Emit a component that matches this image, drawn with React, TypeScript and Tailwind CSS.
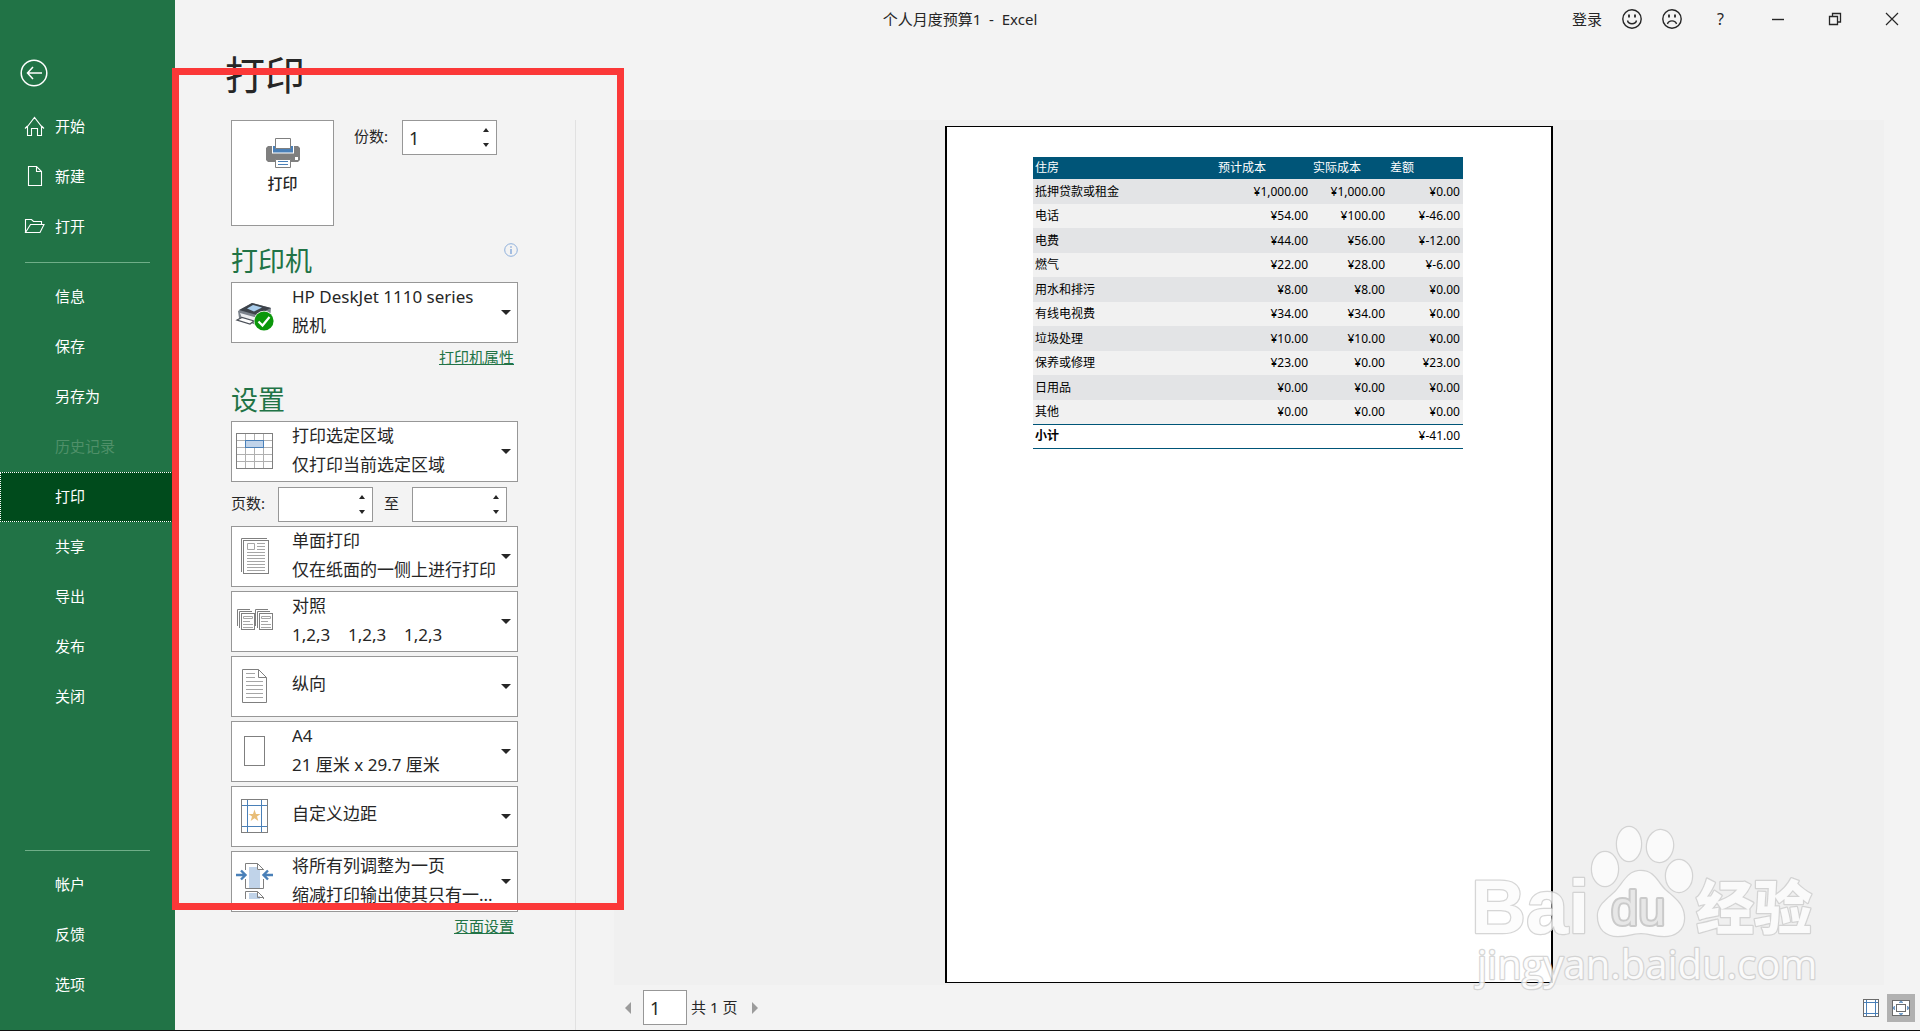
import type { ReactNode } from "react";

interface NavItem {
  label: string;
  icon?: ReactNode;
  active?: boolean;
  disabled?: boolean;
}

interface SettingProps {
  label: string;
  title: string;
  detail?: string;
  icon: ReactNode;
}

const topItems: NavItem[] = [
  {
    label: "开始",
    icon: <path d="M3.5 10.5 10.5 1.5 17.5 10.5V19.5H13.5V12.5H7.5V19.5H3.5V10.5M1 12.5 3.5 10M20 12.5 17.5 10" />,
  },
  { label: "新建", icon: <path d="M4.5 .5H12.5L17.5 5.5V19.5H4.5ZM12.5 .5V5.5H17.5" /> },
  { label: "打开", icon: <path d="M1.5 16.5V3.5H7.5L9.5 5.5H17.5V8.5M1.5 16.5 6.5 8.5H20L16 16.5Z" /> },
];

const fileItems: NavItem[] = [
  { label: "信息" },
  { label: "保存" },
  { label: "另存为" },
  { label: "历史记录", disabled: true },
  { label: "打印", active: true },
  { label: "共享" },
  { label: "导出" },
  { label: "发布" },
  { label: "关闭" },
];

const bottomItems: NavItem[] = [{ label: "帐户" }, { label: "反馈" }, { label: "选项" }];

const budgetRows = [
  ["抵押贷款或租金", "¥1,000.00", "¥1,000.00", "¥0.00"],
  ["电话", "¥54.00", "¥100.00", "¥-46.00"],
  ["电费", "¥44.00", "¥56.00", "¥-12.00"],
  ["燃气", "¥22.00", "¥28.00", "¥-6.00"],
  ["用水和排污", "¥8.00", "¥8.00", "¥0.00"],
  ["有线电视费", "¥34.00", "¥34.00", "¥0.00"],
  ["垃圾处理", "¥10.00", "¥10.00", "¥0.00"],
  ["保养或修理", "¥23.00", "¥0.00", "¥23.00"],
  ["日用品", "¥0.00", "¥0.00", "¥0.00"],
  ["其他", "¥0.00", "¥0.00", "¥0.00"],
];

function NavList({ items }: { items: NavItem[] }) {
  return (
    <ul>
      {items.map((item) => (
        <li key={item.label}>
          <button
            disabled={item.disabled}
            className={`flex h-[50px] w-full items-center border pb-0.5 text-left text-[15px] ${
              item.active ? "border-dotted border-white bg-[#004b1c]" : "border-transparent"
            } ${item.disabled ? "text-[#4f9069]" : "text-white"}`}
          >
            <span className="flex w-[54px] justify-end pr-2.5">
              {item.icon && (
                <svg width="21" height="20" viewBox="0 0 21 20" fill="none" stroke="white" strokeWidth="1.1">
                  {item.icon}
                </svg>
              )}
            </span>
            {item.label}
          </button>
        </li>
      ))}
    </ul>
  );
}

function Sidebar() {
  return (
    <nav className="flex w-[175px] shrink-0 flex-col bg-[#217346] pb-5">
      <button aria-label="返回" className="mt-[59px] mb-[15px] ml-5 w-7">
        <svg width="28" height="28" viewBox="0 0 28 28" fill="none" stroke="white" strokeWidth="1.5">
          <circle cx="14" cy="14" r="12.8" />
          <path d="M22 14H7.5M13 8 7.5 14 13 20" />
        </svg>
      </button>
      <NavList items={topItems} />
      <hr className="mx-[25px] mt-[10px] mb-[9px] border-[#6fae88]" />
      <NavList items={fileItems} />
      <hr className="mx-[25px] mt-auto mb-[9px] border-[#6fae88]" />
      <NavList items={bottomItems} />
    </nav>
  );
}

function TitleBar() {
  return (
    <header className="-ml-[175px] grid h-[38px] shrink-0 grid-cols-[1fr_auto_1fr] items-center text-[15px]">
      <span />
      <div className="whitespace-pre">个人月度预算1  -  Excel</div>
      <div className="flex items-center justify-end">
        <button className="pr-2.5">登录</button>
        <button aria-label="笑脸" className="flex w-10 justify-center">
          <svg width="20" height="20" viewBox="0 0 20 20" fill="none" stroke="#262626" strokeWidth="1.4">
            <circle cx="10" cy="10" r="9.2" />
            <path d="M5.5 11.5C6.5 15.8 13.5 15.8 14.5 11.5" />
            <path d="M7 5.5V8.5M13 5.5V8.5" strokeWidth="1.8" />
          </svg>
        </button>
        <button aria-label="哭脸" className="flex w-10 justify-center">
          <svg width="20" height="20" viewBox="0 0 20 20" fill="none" stroke="#262626" strokeWidth="1.4">
            <circle cx="10" cy="10" r="9.2" />
            <path d="M5.5 15C6.5 10.8 13.5 10.8 14.5 15" />
            <path d="M7 5.5V8.5M13 5.5V8.5" strokeWidth="1.8" />
          </svg>
        </button>
        <button className="w-[57px] text-base">?</button>
        <button aria-label="最小化" className="flex w-[57px] justify-center">
          <svg width="14" height="14" viewBox="0 0 14 14" stroke="#262626">
            <path d="M1 7.5H13" strokeWidth="1.4" />
          </svg>
        </button>
        <button aria-label="还原" className="flex w-[57px] justify-center">
          <svg width="14" height="14" viewBox="0 0 14 14" fill="none" stroke="#262626" strokeWidth="1.3">
            <path d="M1.5 4.5H9.5V12.5H1.5ZM4.5 4V1.5H12.5V10H10" />
          </svg>
        </button>
        <button aria-label="关闭窗口" className="flex w-[57px] justify-center">
          <svg width="14" height="14" viewBox="0 0 14 14" stroke="#262626" strokeWidth="1.2">
            <path d="M1 1 13 13M13 1 1 13" />
          </svg>
        </button>
      </div>
    </header>
  );
}

function NumberBox({ id, label, value }: { id: string; label?: string; value?: number }) {
  return (
    <div className="flex h-[35px] w-[95px] border border-[#979797] bg-white">
      <input
        id={id}
        type="number"
        aria-label={label}
        defaultValue={value}
        className="w-full min-w-0 flex-1 pl-1.5 text-lg outline-none [appearance:textfield] [&::-webkit-inner-spin-button]:appearance-none"
      />
      <div className="flex w-5 flex-col items-center justify-around py-px">
        <button aria-label="增加">
          <svg width="6" height="4" viewBox="0 0 6 4" fill="#262626" className="block">
            <path d="M0 4 3 0 6 4Z" />
          </svg>
        </button>
        <button aria-label="减少">
          <svg width="6" height="4" viewBox="0 0 6 4" fill="#262626" className="block">
            <path d="M0 0 3 4 6 0Z" />
          </svg>
        </button>
      </div>
    </div>
  );
}

// The select carries the first line; icon, detail line and caret share its grid cell
function Setting({ label, title, detail, icon }: SettingProps) {
  return (
    <div className="grid h-[61px] border border-[#979797] bg-white text-[17px] leading-[28px]">
      <select
        aria-label={label}
        className={`col-start-1 row-start-1 h-[59px] w-full appearance-none pl-[60px] outline-none ${
          detail ? "pb-[31px]" : "pb-[5px]"
        }`}
      >
        <option>{title}</option>
      </select>
      <svg
        width="37"
        height="36"
        viewBox="0 0 37 36"
        fill="none"
        stroke="#7f7f7f"
        className="pointer-events-none col-start-1 row-start-1 mt-[11px] ml-1 overflow-visible"
      >
        {icon}
      </svg>
      {detail && (
        <span className="pointer-events-none col-start-1 row-start-1 self-end whitespace-pre pb-0.5 pl-[60px]">
          {detail}
        </span>
      )}
      <svg
        width="10"
        height="5"
        viewBox="0 0 10 5"
        fill="#262626"
        className="pointer-events-none col-start-1 row-start-1 mr-1.5 self-center justify-self-end"
      >
        <path d="M0 0H10L5 5Z" />
      </svg>
    </div>
  );
}

const printerIcon = (
  <g stroke="none">
    <path d="M2 17 16 9 35 14 34 24 20 31 3 24Z" fill="#7b828b" />
    <path d="M3 16 16 9 35 14 21 21Z" fill="#3d434a" />
    <path d="M11 14.5 17 11 26 13.5 18 17.5Z" fill="#a9cdec" />
    <path d="M4 19 20 23.500V29L6 24Z" fill="#eceef0" />
    <path d="M1 26 6 23.5 18 27 14 30Z" fill="#fff" stroke="#4b5058" strokeWidth="1.2" />
    <circle cx="28" cy="27" r="10.2" fill="#fff" />
    <circle cx="28" cy="27" r="9.6" fill="#0b970b" />
    <path d="M22.5 27.5 26.5 31.5 33.5 23" fill="none" stroke="#fff" strokeWidth="2.2" />
  </g>
);

const rangeIcon = (
  <>
    <path d="M9.5 1V35M18.5 1V35M27.5 1V35M1 7.5H36M1 14.5H36M1 21.5H36M1 28.5H36" stroke="#b0b0b0" />
    <rect x=".5" y=".5" width="36" height="35" />
    <rect x="9.5" y="7.5" width="18" height="7" fill="#c0d3e9" stroke="#4a80b8" />
  </>
);

const sidesIcon = (
  <>
    <path d="M5.5 34V.5H31" />
    <rect x="7.5" y="2.5" width="25" height="33" />
    <path
      d="M11.5 5.5H18.5V11.5H11.5ZM21 5.5H29M21 8.5H29M21 11.5H29M11 14.5H29M11 17.5H29M11 20.5H29M11 23.5H29M11 26.5H29M11 29.5H29M11 32.5H29"
      stroke="#a6a6a6"
    />
  </>
);

function CollatedPages() {
  return (
    <>
      <path d="M1.5 23V6.5H14M3.5 25V8.5H16" />
      <rect x="5.5" y="10.5" width="13" height="16" />
      <path d="M7.5 13.5H16.5V15.5H7.5ZM7 18.5H14M7 21.5H17M7 24.5H17" stroke="#a6a6a6" />
    </>
  );
}

const collateIcon = (
  <>
    <CollatedPages />
    <g transform="translate(18 0)">
      <CollatedPages />
    </g>
  </>
);

const portraitIcon = (
  <>
    <path d="M6.5 1.5H22.5L30.5 9.5V34.5H6.5ZM22.5 1.5V9.5H30.5" />
    <path d="M10 5.5H19M10 9.5H19M10 13.5H27M10 17.5H27M10 21.5H27M10 25.5H27M10 29.5H27" stroke="#a6a6a6" />
  </>
);

const paperIcon = <rect x="8.5" y="3.5" width="20" height="29" />;

const marginsIcon = (
  <>
    <path d="M11.5 1V34M25.5 1V34M5 7.5H32M5 28.5H32" stroke="#4a80b8" />
    <rect x="5.5" y="1.5" width="26" height="33" />
    <path d="M18.5 11.5 20 16H24.5L21 18.5 22.3 23 18.5 20.3 14.7 23 16 18.5 12.5 16H17Z" fill="#e8bd77" stroke="none" />
  </>
);

const scalingIcon = (
  <>
    <path d="M13 4H21V7H24V25H13ZM13 30H21V33H24V36H13Z" fill="#c0d3e9" stroke="none" />
    <path d="M9.5 7V.5H21.5L27.5 6.5V7M21.5 .5V6.5H27.5M9.5 16V25.5H27.5V16M9.5 36V28.5H21.5L27.5 34.5V36M21.5 28.5V34.5H27.5" />
    <path d="M0 12H9M5 7.5 9.5 12 5 16.5M37 12H28M32 7.5 27.5 12 32 16.5" stroke="#4a80b8" strokeWidth="2.4" />
  </>
);

function SettingsPanel() {
  return (
    <div className="w-[345px] shrink-0 border-r border-[#e1e1e1] pr-[57px]">
      <div className="flex items-start">
        <button className="flex h-[106px] w-[103px] flex-col items-center border border-[#979797] bg-white pt-[17px] text-[15px] font-medium">
          <svg width="34" height="30" viewBox="0 0 34 30" className="mb-1">
            <path d="M2 8H32L34 10V22L32 24H2L0 22V10Z" fill="#7f7f7f" />
            <path d="M6 7H28V15.5H6Z" fill="#fff" />
            <path d="M7 8H27V14.5H7Z" fill="#4a80b8" />
            <path d="M9.5 .5H24.5V10.5H9.5ZM9.5 21.5H24.5V29.5H9.5Z" fill="#fff" stroke="#7f7f7f" />
            <path d="M29 19H32V22H29Z" fill="#fff" />
            <path d="M12 23.5H22M12 26.5H22" stroke="#4a80b8" />
          </svg>
          打印
        </button>
        <label htmlFor="copies" className="ml-5 w-12 text-[15px] leading-[33px]">
          份数:
        </label>
        <NumberBox id="copies" value={1} />
      </div>

      <div className="mt-[17px] mb-[3px] flex items-start justify-between">
        <h2 className="text-[27px] leading-9 text-[#217346]">打印机</h2>
        <svg width="14" height="14" viewBox="0 0 14 14" fill="none" stroke="#8fb0dc">
          <circle cx="7" cy="7" r="6.3" />
          <path d="M7 6V11M7 3.2V4.8" strokeWidth="1.6" />
        </svg>
      </div>
      <Setting label="打印机" title="HP DeskJet 1110 series" detail="脱机" icon={printerIcon} />
      <div className="pt-[3px] pr-1 text-right text-[15px] leading-[22px]">
        <a href="#printer" className="text-[#217346] underline">
          打印机属性
        </a>
      </div>

      <h2 className="mt-[14px] mb-[3px] text-[27px] leading-9 text-[#217346]">设置</h2>
      <div className="flex flex-col gap-1">
        <Setting label="打印范围" title="打印选定区域" detail="仅打印当前选定区域" icon={rangeIcon} />
        <div className="flex pt-px text-[15px] leading-[33px]">
          <label htmlFor="page-from" className="w-[47px]">
            页数:
          </label>
          <NumberBox id="page-from" />
          <label htmlFor="page-to" className="w-[39px] pr-0.5 text-center">
            至
          </label>
          <NumberBox id="page-to" />
        </div>
        <Setting label="单双面" title="单面打印" detail="仅在纸面的一侧上进行打印" icon={sidesIcon} />
        <Setting label="排序" title="对照" detail="1,2,3    1,2,3    1,2,3" icon={collateIcon} />
        <Setting label="方向" title="纵向" icon={portraitIcon} />
        <Setting label="纸张" title="A4" detail="21 厘米 x 29.7 厘米" icon={paperIcon} />
        <Setting label="页边距" title="自定义边距" icon={marginsIcon} />
        <Setting label="缩放" title="将所有列调整为一页" detail="缩减打印输出使其只有一..." icon={scalingIcon} />
      </div>
      <div className="pt-[3px] pr-1 text-right text-[15px] leading-[22px]">
        <a href="#page-setup" className="text-[#217346] underline">
          页面设置
        </a>
      </div>
    </div>
  );
}

function BudgetTable() {
  return (
    <table className="w-full table-fixed text-xs leading-4 text-black">
      <colgroup>
        <col />
        <col className="w-[95px]" />
        <col className="w-[77px]" />
        <col className="w-[75px]" />
      </colgroup>
      <thead>
        <tr className="h-[22px] bg-[#005578] text-left text-white">
          {["住房", "预计成本", "实际成本", "差额"].map((name) => (
            <th key={name} className="p-0 pl-0.5 font-normal">
              {name}
            </th>
          ))}
        </tr>
      </thead>
      <tbody>
        {budgetRows.map(([name, ...amounts]) => (
          <tr key={name} className="odd:h-[25px] odd:bg-[#e3e4e6] even:h-6 even:bg-[#f1f1f1]">
            <td className="p-0 pl-0.5">{name}</td>
            {amounts.map((amount, index) => (
              <td key={index} className="p-0 pr-[3px] text-right">
                {amount}
              </td>
            ))}
          </tr>
        ))}
      </tbody>
      <tfoot>
        <tr className="h-6 border-y border-[#005578]">
          <td className="p-0 pl-0.5 font-bold">小计</td>
          <td colSpan={3} className="p-0 pr-[3px] text-right">
            ¥-41.00
          </td>
        </tr>
      </tfoot>
    </table>
  );
}

function PreviewFooter() {
  return (
    <footer className="flex h-[45px] shrink-0 items-center pr-[5px] pl-[49px]">
      <button aria-label="上一页" className="mr-3">
        <svg width="6" height="12" viewBox="0 0 6 12" fill="#9b9b9b" className="block">
          <path d="M6 0V12L0 6Z" />
        </svg>
      </button>
      <input
        aria-label="当前页"
        defaultValue="1"
        className="mr-1 h-[35px] w-11 border border-[#979797] bg-white pl-1.5 text-lg outline-none"
      />
      <span className="w-12 text-[15px]">共 1 页</span>
      <button aria-label="下一页" className="ml-[13px]">
        <svg width="6" height="12" viewBox="0 0 6 12" fill="#9b9b9b" className="block">
          <path d="M0 0V12L6 6Z" />
        </svg>
      </button>
      <button aria-label="显示边距" className="mr-2 ml-auto">
        <svg width="16" height="18" viewBox="0 0 16 18" fill="#fff" stroke="#6b6b6b" className="block">
          <rect x=".5" y=".5" width="15" height="17" />
          <path d="M3.5 1V17M12.5 1V17M1 3.5H15M1 14.5H15" stroke="#4a80b8" />
        </svg>
      </button>
      <button aria-label="缩放到页面" className="flex size-7 items-center justify-center bg-[#b1b1b1]">
        <svg width="18" height="16" viewBox="0 0 18 16" fill="#fff" stroke="#6b6b6b">
          <rect x=".5" y=".5" width="17" height="15" />
          <rect x="4.5" y="4.5" width="9" height="7" />
          <path d="M7 2.5H11L9 1ZM7 13.5H11L9 15ZM2.5 6V10L1 8ZM15.5 6V10L17 8Z" fill="#4a80b8" stroke="#4a80b8" strokeWidth=".5" />
        </svg>
      </button>
    </footer>
  );
}

function Watermark() {
  return (
    <svg
      width="352"
      height="180"
      viewBox="0 0 352 180"
      fill="#fcfcfc"
      stroke="#cfcfcf"
      strokeWidth="2.5"
      strokeLinejoin="round"
      paintOrder="stroke"
      opacity=".85"
      className="pointer-events-none absolute right-[98px] bottom-[30px]"
    >
      <text x="1" y="113" fontSize="76" fontWeight="bold" fontFamily="Liberation Sans, sans-serif">
        Bai
      </text>
      <ellipse cx="135" cy="49" rx="13" ry="17" />
      <ellipse cx="159" cy="24" rx="12" ry="17" />
      <ellipse cx="190" cy="26" rx="13" ry="16" transform="rotate(8 190 26)" />
      <ellipse cx="209" cy="56" rx="13" ry="16" />
      <path d="M171 51C184 51 187 62 195 70C204 78 214 84 214 98C214 110 205 116 194 116C184 116 180 113 171 113C162 113 158 116 148 116C136 116 128 109 128 96C128 84 139 79 147 70C155 61 158 51 171 51Z" />
      <text x="141" y="105" fontSize="49" fontFamily="Liberation Sans, sans-serif" fill="#e6e6e6" stroke="#c4c4c4" strokeWidth="4">
        du
      </text>
      <text x="226" y="109" fontSize="58" fontWeight="900" fontFamily="Noto Sans CJK SC, sans-serif">
        经验
      </text>
      <text x="7" y="159" fontSize="40" fontFamily="Open Sans, sans-serif">
        jingyan.baidu.com
      </text>
    </svg>
  );
}

export default function App() {
  return (
    <div className="relative flex min-h-screen border-b border-[#111] bg-[#f3f3f3] font-['Noto_Sans','Noto_Sans_CJK_SC',sans-serif] text-[#262626]">
      <Sidebar />
      <main className="flex min-w-0 flex-1 flex-col">
        <TitleBar />
        <h1 className="mt-[13px] mb-[21px] ml-[50px] text-[40px] leading-[48px]">打印</h1>
        <div className="flex flex-1 pl-14">
          <SettingsPanel />
          <section className="flex min-w-0 flex-1 flex-col">
            <div className="mr-9 ml-[38px] flex flex-1 justify-center bg-[#f0f0f0] pt-1.5 pb-0.5">
              <div className="w-[608px] border border-r-2 border-l-2 border-black bg-white pt-[30px] pr-[88px] pl-[86px]">
                <BudgetTable />
              </div>
            </div>
            <PreviewFooter />
          </section>
        </div>
      </main>
      {/* highlight frame around the print settings */}
      <div className="pointer-events-none absolute top-[68px] left-[172px] h-[842px] w-[452px] border-[7px] border-[#fb3838]" />
      <Watermark />
    </div>
  );
}
